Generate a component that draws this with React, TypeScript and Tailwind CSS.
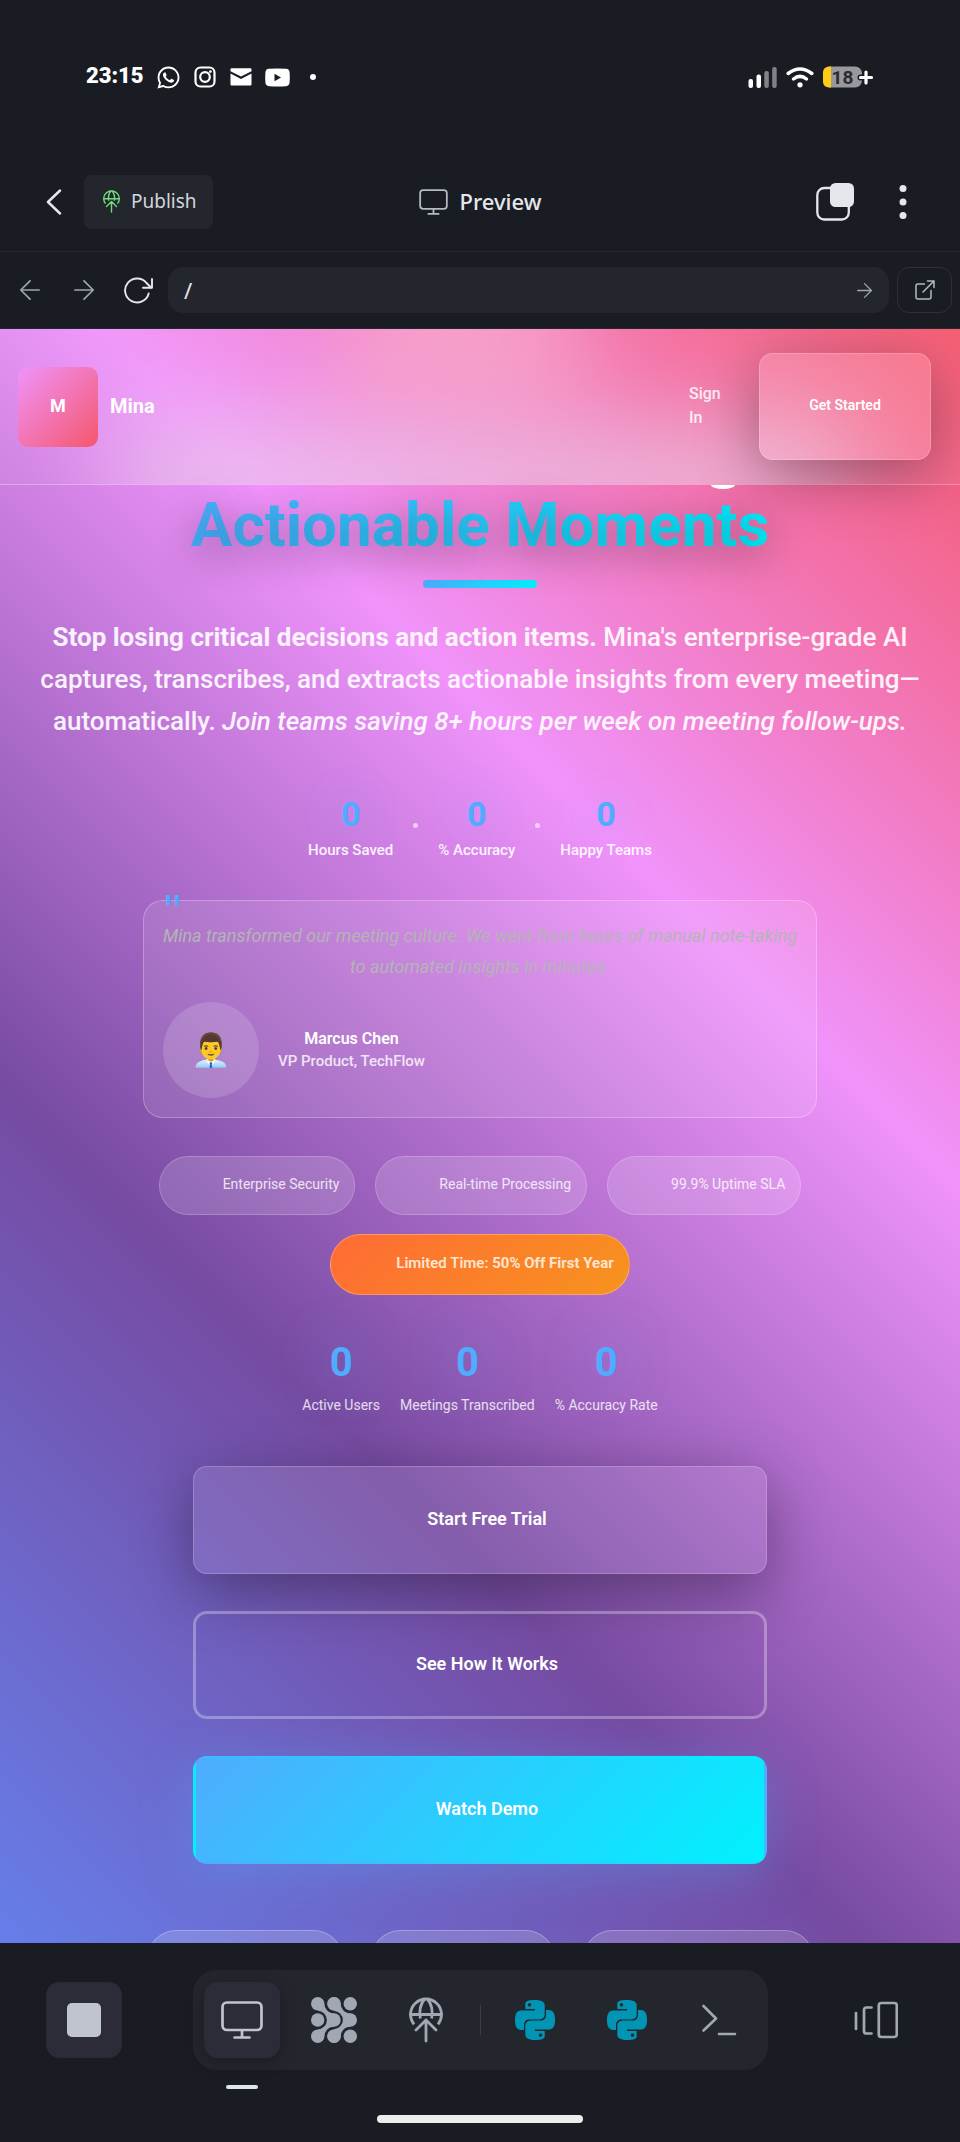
import type { ReactNode } from 'react';
import { FaWhatsapp } from 'react-icons/fa';
import { SiPython } from 'react-icons/si';

function StatusBar() {
  return (
    <div className="flex h-[152px] shrink-0 items-center justify-between px-[86px] pt-[2px] text-white">
      <div className="flex items-center gap-3">
        <span className="pb-[2px] font-['Roboto',sans-serif] text-[22px] leading-[30px] font-black">23:15</span>
        <FaWhatsapp size={25} />
        <svg width="22" height="22" viewBox="0 0 22 22" fill="none" stroke="currentColor" strokeWidth="2.2" className="mx-px">
          <rect x="1.5" y="1.5" width="19" height="19" rx="5" />
          <circle cx="11" cy="11" r="4.8" />
          <circle cx="16.4" cy="5.6" r="1.4" fill="currentColor" stroke="none" />
        </svg>
        <svg width="22" height="18" viewBox="0 0 22 18" fill="currentColor" className="mx-px">
          <path d="M0.5 1.5 Q0.5 0.3 1.7 0.3 H20.3 Q21.5 0.3 21.5 1.5 V3.2 L11 8.4 L0.5 3.2 Z" />
          <path d="M0.5 5.6 L11 10.9 L21.5 5.6 V16.6 Q21.5 17.6 20.5 17.6 H1.5 Q0.5 17.6 0.5 16.6 Z" />
        </svg>
        <svg width="25" height="19" viewBox="0 0 25 19">
          <path fill="currentColor" d="M4 .8Q12.500 0 21 .8q3.400.3 3.600 3.600.4 5.100 0 10.200-.2 3.300-3.600 3.600-8.500.8-17 0Q.6 17.900.4 14.600 0 9.500.4 4.400.6 1.100 4 .8z" />
          <path fill="#1a1c24" d="M9.500 5.800v7.400l6.500-3.700z" />
        </svg>
        <span className="ml-2 size-[6px] rounded-full bg-white" />
      </div>
      <div className="flex items-center gap-[9px]">
        <svg width="29" height="21" viewBox="0 0 29 21" fill="currentColor">
          <rect x="0.500" y="12" width="4.500" height="9" rx="2" />
          <rect x="8.500" y="7.500" width="4.500" height="13.500" rx="2" />
          <rect x="16.300" y="4" width="4.500" height="17" rx="2" opacity=".45" />
          <rect x="24.200" y="0" width="4.500" height="21" rx="2" opacity=".45" />
        </svg>
        <svg width="28" height="21" viewBox="0 0 28 21" fill="none" stroke="currentColor" strokeWidth="3.500" strokeLinecap="round">
          <path d="M2.200 6.500Q14-2.500 25.800 6.500" />
          <path d="M7.500 12Q14 6.800 20.500 12" />
          <circle cx="14" cy="17.800" r="2.600" fill="currentColor" stroke="none" />
        </svg>
        <svg width="51" height="22" viewBox="0 0 51 22">
          <rect x="0" y="0.500" width="39" height="21" rx="7" fill="#98989d" />
          <path d="M8 .5H6.500Q0 .5 0 7v8q0 6.500 6.500 6.500H8z" fill="#ffcc14" />
          <path d="M43 6v11M37.500 11.500h11" stroke="#1a1c24" strokeWidth="6" strokeLinecap="round" />
          <path d="M43 6v11M37.500 11.500h11" stroke="#fff" strokeWidth="3.200" strokeLinecap="round" />
          <text x="19.500" y="17.500" textAnchor="middle" fontFamily="Roboto, sans-serif" fontWeight="700" fontSize="19" fill="#2c2c30">18</text>
        </svg>
      </div>
    </div>
  );
}

function MonitorIcon({ className, strokeWidth = 2.6 }: { className: string; strokeWidth?: number }) {
  return (
    <svg viewBox="0 0 42 38" fill="none" stroke="currentColor" strokeWidth={strokeWidth} strokeLinecap="round" className={className}>
      <rect x="1.500" y="1.500" width="39" height="27.500" rx="4.500" />
      <path d="M21 29.500v6.500M13.500 36.500h15" />
    </svg>
  );
}

function PublishIcon({ className }: { className: string }) {
  return (
    <svg viewBox="0 0 34 46" fill="none" stroke="currentColor" strokeWidth="2.800" strokeLinecap="round" strokeLinejoin="round" className={className}>
      <path d="M5 27.300A15.500 15.500 0 1 1 29 27.300" strokeLinecap="butt" />
      <path d="M1.500 17.500h31" />
      <path d="M11.300 21.500Q9.300 9 16 1.500M22.700 21.500Q24.700 9 18 1.500" strokeLinecap="butt" />
      <path d="M17 44V23M7 33l10-10 10 10" />
    </svg>
  );
}

function AgentChain() {
  return (
    <>
      <circle cx="6.700" cy="6.700" r="6.700" />
      <circle cx="23" cy="23" r="6.700" />
      <circle cx="6.700" cy="39.300" r="6.700" />
      <path d="M13.400 6.700C13.700 12 17.500 16.300 23 16.300V29.700C17.500 29.700 13.700 34 13.400 39.300L6.700 32.600L13 27V19L6.700 13.400Z" />
    </>
  );
}

function AgentIcon() {
  return (
    <svg width="46" height="46" viewBox="0 0 46 46" fill="currentColor">
      <g transform="translate(16.300 0)">
        <AgentChain />
      </g>
      <g stroke="#24262e" strokeWidth="4.400" fill="#24262e">
        <path d="M13.400 6.700C13.700 12 17.500 16.300 23 16.300A6.700 6.700 0 0 1 23 29.700C17.500 29.700 13.700 34 13.400 39.300L6.700 32.600V13.400Z" />
      </g>
      <circle cx="23" cy="6.700" r="6.700" />
      <circle cx="23" cy="39.300" r="6.700" />
      <AgentChain />
      <g stroke="#24262e" strokeWidth="5" paintOrder="stroke">
        <circle cx="6.700" cy="23" r="6.700" />
      </g>
      <circle cx="39.300" cy="6.700" r="6.700" />
      <circle cx="39.300" cy="39.300" r="6.700" />
    </svg>
  );
}

function ArrowIcon({ size, back = false }: { size: number; back?: boolean }) {
  return (
    <svg width={size} height={size} viewBox="0 0 20 20" fill="none" stroke="currentColor" strokeWidth="1.700" strokeLinecap="round" strokeLinejoin="round">
      {back ? <path d="M19.200 10H1M10 .8.800 10l9.200 9.200" /> : <path d="M.8 10H19M10 .8l9.200 9.200-9.200 9.200" />}
    </svg>
  );
}

function Toolbar() {
  return (
    <div className="grid h-[100px] shrink-0 grid-cols-[1fr_auto_1fr] items-center border-b border-[#242632] font-['Noto_Sans',sans-serif]">
      <div className="flex items-center pl-[46px]">
        <button aria-label="Back" className="text-[#e6e7ec]">
          <svg width="16" height="26" viewBox="0 0 16 26" fill="none" stroke="currentColor" strokeWidth="2.500" strokeLinecap="round" strokeLinejoin="round">
            <path d="M14 1.500 2 13l12 11.500" />
          </svg>
        </button>
        <button className="ml-[22px] flex h-[54px] items-center gap-[11px] rounded-lg bg-[#24262e] pr-4 pl-[19px] text-[19px] text-[#d3d5dc]">
          <PublishIcon className="h-[23px] w-[17px] text-[#6fdc7d]" />
          Publish
        </button>
      </div>
      <h1 className="flex items-center gap-3 text-[22px] font-medium text-[#e6e7ec]">
        <MonitorIcon className="h-[26px] w-[29px] text-[#b5b9c3]" />
        Preview
      </h1>
      <div className="flex items-center justify-end gap-[44px] pr-[52px] text-[#e6e7ec]">
        <button aria-label="Tabs">
          <svg width="38" height="38" viewBox="0 0 38 38">
            <rect x="1.300" y="5" width="31.500" height="31.500" rx="7" fill="none" stroke="currentColor" strokeWidth="2.300" />
            <rect x="14" y="0" width="24" height="24" rx="5.500" fill="currentColor" />
          </svg>
        </button>
        <button aria-label="More">
          <svg width="10" height="36" viewBox="0 0 10 36" fill="currentColor">
            <circle cx="5" cy="4.500" r="3.500" />
            <circle cx="5" cy="18" r="3.500" />
            <circle cx="5" cy="31.500" r="3.500" />
          </svg>
        </button>
      </div>
    </div>
  );
}

function AddressRow() {
  return (
    <div className="flex h-[77px] shrink-0 items-center border-b border-[#242632] pr-2 pl-5 text-[#a0a4b0]">
      <button aria-label="Previous page"><ArrowIcon size={20} back /></button>
      <button aria-label="Next page" className="ml-[34px]"><ArrowIcon size={20} /></button>
      <button aria-label="Reload" className="ml-[30px] text-[#e6e7ec]">
        <svg width="29" height="27" viewBox="0 0 29 27" fill="none" stroke="currentColor" strokeWidth="1.900" strokeLinecap="round" strokeLinejoin="round">
          <path d="M24.700 16.500A12 12 0 1 1 22.500 6L27 10.500" />
          <path d="M28 2v8.800h-9" />
        </svg>
      </button>
      <div className="ml-[15px] flex h-[46px] flex-1 items-center rounded-[15px] bg-[#24262e] pr-[17px] pl-4">
        <input
          aria-label="Address"
          defaultValue="/"
          className="min-w-0 flex-1 bg-transparent font-['Noto_Sans',sans-serif] text-[22px] text-[#e6e7ec] outline-none"
        />
        <button aria-label="Go"><ArrowIcon size={15} /></button>
      </div>
      <button aria-label="Open in new tab" className="ml-2 flex h-[46px] w-[55px] items-center justify-center rounded-[12px] border border-[#2d2f3c] text-[#b5b9c3]">
        <svg width="20" height="20" viewBox="0 0 20 20" fill="none" stroke="currentColor" strokeWidth="1.500" strokeLinecap="round" strokeLinejoin="round">
          <path d="M9.500 4H3Q1 4 1 6v11q0 2 2 2h11q2 0 2-2v-6.500" />
          <path d="M8 12 19 1M12.500 1H19v6.500" />
        </svg>
      </button>
    </div>
  );
}

function SiteHeader() {
  return (
    <header className="relative flex h-[156px] shrink-0 items-center justify-between border-b border-white/30 bg-white/5 pr-[29px] pl-[18px]">
      <div className="absolute inset-0 overflow-hidden">
        <div className="absolute -top-[60px] left-[36%] h-[140px] w-[24%] bg-[#f8a8cc] opacity-80 blur-[45px]" />
        <div className="absolute -bottom-[60px] left-[12%] h-[120px] w-[76%] bg-[#e8d0e6] opacity-60 blur-[45px]" />
      </div>
      <div className="relative flex items-center gap-3 font-bold text-white">
        <div className="flex size-20 items-center justify-center rounded-[10px] bg-[linear-gradient(135deg,#f093fb,#f5576c)] pb-[2px] text-[18px]">M</div>
        <span className="pb-[2px] text-[20px]">Mina</span>
      </div>
      <div className="relative flex items-center gap-[26px]">
        <a href="#signin" className="w-[44px] pb-[2px] text-[16px] leading-6 font-medium text-white/85">Sign In</a>
        <button className="h-[107px] w-[172px] rounded-[14px] border border-white/20 bg-white/15 pb-[2px] text-[14px] font-semibold text-white shadow-[0_16px_60px_rgba(0,0,0,0.35)]">
          Get Started
        </button>
      </div>
    </header>
  );
}

function Counter({ label, large = false }: { label: string; large?: boolean }) {
  return (
    <div className="flex flex-col items-center">
      <span
        className={
          large
            ? 'text-[40px] leading-[52px] font-bold text-[#4facfe] [text-shadow:0_0_50px_rgba(79,172,254,0.5)]'
            : 'text-[34px] leading-[40px] font-bold text-[#4facfe] [text-shadow:0_0_40px_rgba(79,172,254,0.4)]'
        }
      >
        0
      </span>
      <span className={large ? 'mt-1 text-[14px] leading-6 text-white/80' : 'mt-1 text-[15px] leading-6 font-medium text-white/90'}>
        {label}
      </span>
    </div>
  );
}

function Dot() {
  return <span className="mt-[29px] size-[5px] rounded-full bg-white/60" />;
}

function TrustBadge({ children }: { children: ReactNode }) {
  return (
    <div className="flex h-[59px] items-center rounded-full border border-white/20 bg-white/15 pr-[15px] pb-[2px] pl-[63px] text-[14px] text-white/80">
      {children}
    </div>
  );
}

function Hero() {
  return (
    <section className="flex shrink-0 flex-col items-center px-9 pt-[5px] text-center">
      <h2 className="relative text-[62px] leading-[70px] font-bold">
        <span className="absolute -top-[5px] left-[90%] h-1 w-6 rounded-[0_0_50%_50%/0_0_100%_100%] bg-white" />
        <span className="bg-[linear-gradient(135deg,#4facfe,#00f2fe)] bg-clip-text text-transparent [text-shadow:0_10px_40px_rgba(0,0,0,0.4)]">
          Actionable Moments
        </span>
      </h2>
      <div className="mt-5 h-2 w-[114px] rounded bg-[linear-gradient(135deg,#4facfe,#00f2fe)]" />
      <p className="mt-7 text-[26px] leading-[42px] font-medium text-white/90">
        <strong className="font-bold">Stop losing critical decisions and action items.</strong> Mina's enterprise-grade AI captures,
        transcribes, and extracts actionable insights from every meeting—automatically.{' '}
        <em>Join teams saving 8+ hours per week on meeting follow-ups.</em>
      </p>

      <div className="mt-[52px] flex gap-5">
        <Counter label="Hours Saved" />
        <Dot />
        <Counter label="% Accuracy" />
        <Dot />
        <Counter label="Happy Teams" />
      </div>

      <figure className="relative mt-[38px] w-full max-w-[674px] rounded-[20px] border border-white/25 bg-white/10 p-[19px]">
        <span className="absolute -top-px left-5 font-['Liberation_Sans',sans-serif] text-[48px] leading-[24px] text-[#4facfe]">"</span>
        <blockquote className="-mx-2 text-[18px] leading-[31px] text-[#b4b4b6] italic">
          Mina transformed our meeting culture. We went from hours of manual note-taking to automated insights in minutes.
        </blockquote>
        <figcaption className="mt-5 flex items-center gap-[19px]">
          <div className="flex size-24 items-center justify-center rounded-full bg-white/15 text-[32px] leading-[38px]">👨‍💼</div>
          <div className="flex flex-col items-center pb-[2px]">
            <span className="text-[16px] leading-[23px] font-semibold text-white">Marcus Chen</span>
            <span className="text-[15px] leading-[22px] font-medium text-white/80">VP Product, TechFlow</span>
          </div>
        </figcaption>
      </figure>

      <div className="mt-[38px] flex max-w-[674px] flex-wrap justify-center gap-x-5 gap-y-[19px]">
        <TrustBadge>Enterprise Security</TrustBadge>
        <TrustBadge>Real-time Processing</TrustBadge>
        <TrustBadge>99.9% Uptime SLA</TrustBadge>
        <div className="flex h-[61px] items-center rounded-full border border-white/25 bg-[linear-gradient(135deg,#ff6b35,#f7931e)] pr-[15px] pb-[2px] pl-[65px] text-[15px] font-semibold text-[#ffe4cf]">
          <span>Limited Time: <strong className="font-bold">50% Off First Year</strong></span>
        </div>
      </div>

      <div className="mt-[42px] flex gap-5">
        <Counter large label="Active Users" />
        <Counter large label="Meetings Transcribed" />
        <Counter large label="% Accuracy Rate" />
      </div>

      <div className="mt-[49px] flex w-full max-w-[574px] flex-col gap-[37px] text-[18px] font-semibold text-white">
        <button className="h-[108px] rounded-[14px] border border-white/20 bg-white/10 pb-1 pl-[14px] shadow-[0_16px_60px_rgba(0,0,0,0.35)]">
          Start Free Trial
        </button>
        <button className="h-[108px] rounded-[14px] border-[3px] border-white/30 pb-1 pl-[14px]">See How It Works</button>
        <button className="h-[108px] rounded-[14px] border-[3px] border-transparent bg-[linear-gradient(135deg,#4facfe,#00f2fe)] pb-1 pl-[14px] shadow-[0_10px_50px_rgba(79,172,254,0.35)]">
          Watch Demo
        </button>
      </div>

      <div className="mt-[66px] flex justify-center gap-7">
        <div className="h-[59px] w-[196px] rounded-full border border-white/25 bg-white/15" />
        <div className="h-[59px] w-[184px] rounded-full border border-white/25 bg-white/15" />
        <div className="h-[59px] w-[231px] rounded-full border border-white/25 bg-white/15" />
      </div>
    </section>
  );
}

function DockButton({ label, active = false, children }: { label: string; active?: boolean; children: ReactNode }) {
  return (
    <button
      aria-label={label}
      className={
        active
          ? 'relative flex size-[76px] items-center justify-center rounded-[14px] bg-[#2b2c38] text-[#c0c4cd] shadow-[0_4px_16px_rgba(0,0,0,0.25)]'
          : 'flex size-[76px] items-center justify-center rounded-[14px] text-[#a2a8b3]'
      }
    >
      {children}
      {active && <span className="absolute -bottom-[31px] h-1 w-8 rounded-full bg-[#e1e5ec]" />}
    </button>
  );
}

function BottomBar() {
  return (
    <footer className="flex shrink-0 flex-col items-center pt-[27px] pb-[19px]">
      <div className="flex w-full items-center justify-between px-[46px]">
        <button aria-label="Stop" className="flex size-[76px] items-center justify-center rounded-[14px] bg-[#2b2c38]">
          <span className="size-[34px] rounded-[5px] bg-[#c0c4cd]" />
        </button>
        <nav className="flex h-[100px] items-center gap-4 rounded-[24px] bg-[#24262e] px-[11px]">
          <DockButton label="Preview" active><MonitorIcon className="h-[38px] w-[42px]" strokeWidth={2.7} /></DockButton>
          <DockButton label="Agent"><AgentIcon /></DockButton>
          <DockButton label="Publishing"><PublishIcon className="h-[46px] w-[34px]" /></DockButton>
          <span className="h-[30px] w-px bg-[#3a3c48]" />
          <DockButton label="Python console"><SiPython size={40} color="#0095b5" /></DockButton>
          <DockButton label="Python file"><SiPython size={40} color="#0095b5" /></DockButton>
          <DockButton label="Shell">
            <svg width="36" height="32" viewBox="0 0 36 32" fill="none" stroke="currentColor" strokeWidth="2.600" strokeLinecap="round" strokeLinejoin="round">
              <path d="M2.500 2 15 14.500 2.500 26.500M18 30h16" />
            </svg>
          </DockButton>
        </nav>
        <DockButton label="Switch tabs">
          <svg width="44" height="38" viewBox="0 0 44 38" fill="none" stroke="currentColor" strokeWidth="2.700" strokeLinecap="round">
            <rect x="24.800" y="2" width="18" height="34" rx="2.500" />
            <path d="M17.500 6.500h-5q-2.500 0-2.500 2.500v21q0 2.500 2.500 2.500h5M2 12v16" />
          </svg>
        </DockButton>
      </div>
      <div className="mt-[45px] h-2 w-[206px] rounded-full bg-[#ededed]" />
    </footer>
  );
}

export default function App() {
  return (
    <div className="flex h-screen flex-col bg-[#1a1c24]">
      <StatusBar />
      <Toolbar />
      <AddressRow />
      <main className="flex min-h-0 flex-1 flex-col overflow-hidden bg-[linear-gradient(45deg,#667eea,#764ba2,#f093fb,#f5576c)] font-['Roboto',sans-serif]">
        <SiteHeader />
        <Hero />
      </main>
      <BottomBar />
    </div>
  );
}
